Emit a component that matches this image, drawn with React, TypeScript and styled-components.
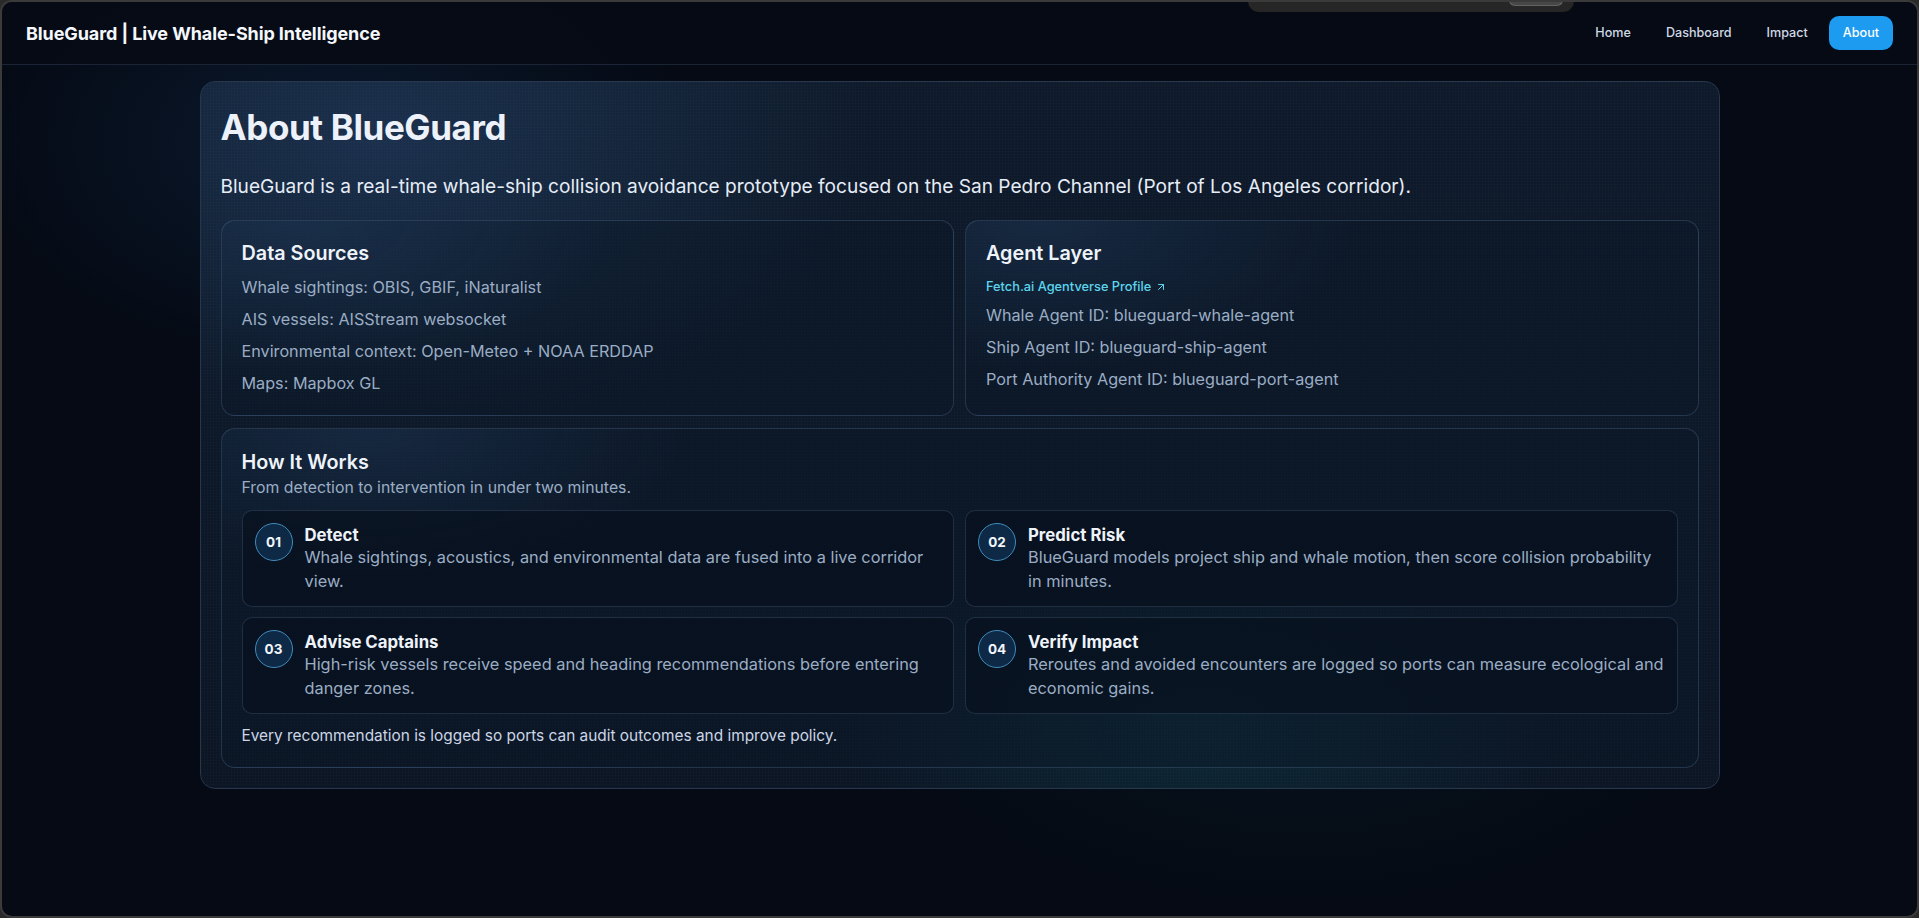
import React from "react";
import styled, { createGlobalStyle } from "styled-components";
import { ArrowUpRight } from "lucide-react";

const GlobalStyle = createGlobalStyle`
  * {
    box-sizing: border-box;
  }
  html,
  body {
    margin: 0;
    padding: 0;
    height: 100%;
    background: #2a2a2a;
  }
  body {
    font-family: Inter, "Noto Sans", sans-serif;
    -webkit-font-smoothing: antialiased;
  }
`;

const Window = styled.div`
  position: relative;
  height: 100vh;
  border: 2px solid #3a3a3a;
  border-radius: 12px;
  overflow: hidden;
  background:
    radial-gradient(ellipse 520px 320px at 330px 140px, rgba(26, 70, 125, 0.24), transparent 70%),
    radial-gradient(ellipse 600px 300px at 1300px 700px, rgba(16, 80, 96, 0.12), transparent 70%),
    #050a14;
`;

// screen-share pill that sits over the top edge of the window
const SharePill = styled.div`
  position: absolute;
  top: -2px;
  left: calc(50% + 288px);
  width: 326px;
  height: 12px;
  background: #262626;
  border-radius: 0 0 11px 11px;
  z-index: 5;
`;

const ShareButton = styled.div`
  position: absolute;
  top: 0;
  right: 11px;
  width: 54px;
  height: 6px;
  background: #474747;
  border: 1px solid #636363;
  border-top: none;
  border-radius: 0 0 6px 6px;
`;

const Header = styled.header`
  height: 63px;
  padding: 0 24px;
  display: flex;
  align-items: center;
  justify-content: space-between;
  background: rgba(6, 11, 22, 0.92);
  border-bottom: 1px solid #1a2434;
`;

const Brand = styled.div`
  color: #f4f7fb;
  font-size: 18px;
  font-weight: 700;
  letter-spacing: -0.1px;
`;

const Nav = styled.nav`
  display: flex;
  align-items: center;
  gap: 7px;
`;

const NavLink = styled.a<{ $active?: boolean }>`
  padding: 8px 14px;
  border-radius: 10px;
  font-size: 12.6px;
  line-height: 18px;
  font-weight: 500;
  text-decoration: none;
  color: ${(p) => (p.$active ? "#ffffff" : "#cfd8e4")};
  background: ${(p) => (p.$active ? "#1d9bf0" : "transparent")};
`;

const Main = styled.main`
  padding: 16px 0 0;
`;

const AboutCard = styled.section`
  width: 1520px;
  margin: 0 auto;
  padding: 20px;
  border: 1px solid #26364c;
  border-radius: 15px;
  background:
    linear-gradient(rgba(255, 255, 255, 0.012) 1px, transparent 1px) 0 0 / 3px 3px,
    linear-gradient(90deg, rgba(255, 255, 255, 0.012) 1px, transparent 1px) 0 0 / 3px 3px,
    radial-gradient(ellipse 700px 420px at 12% 8%, rgba(36, 66, 104, 0.55), transparent 70%),
    radial-gradient(ellipse 520px 260px at 66% 92%, rgba(14, 84, 96, 0.28), transparent 70%),
    linear-gradient(180deg, #0e1a2b 0%, #0b1524 100%);
`;

const Title = styled.h1`
  margin: 4px 0 24px;
  color: #edf2fa;
  font-size: 35px;
  line-height: 1.2;
  font-weight: 700;
  letter-spacing: -0.4px;
`;

const Lead = styled.p`
  margin: 0 0 20px;
  color: #e6edf7;
  font-size: 19.1px;
  line-height: 28px;
`;

const Grid = styled.div`
  display: grid;
  grid-template-columns: 1fr 1fr;
  gap: 12px 11px;
`;

const Panel = styled.div<{ $wide?: boolean }>`
  grid-column: ${(p) => (p.$wide ? "1 / -1" : "auto")};
  padding: ${(p) => (p.$wide ? "21px 20px 20px" : "20px")};
  border: 1px solid rgba(110, 140, 180, 0.26);
  border-radius: 14px;
  background:
    radial-gradient(ellipse 420px 200px at 10% 0%, rgba(40, 70, 108, 0.35), transparent 75%),
    rgba(12, 24, 40, 0.45);
`;

const PanelTitle = styled.h3<{ $tight?: boolean }>`
  margin: 0 0 ${(p) => (p.$tight ? "0" : "10px")};
  color: #eef3fa;
  font-size: 19.8px;
  line-height: 24px;
  font-weight: 600;
`;

const PanelLine = styled.p`
  margin: 0 0 8px;
  color: #9badc4;
  font-size: 16.2px;
  line-height: 24px;
  &:last-child {
    margin-bottom: 0;
  }
`;

const ProfileLink = styled.a`
  display: inline-flex;
  align-items: center;
  gap: 4px;
  margin: -3px 0 6px;
  color: #5cd5ec;
  font-size: 12.8px;
  line-height: 20px;
  font-weight: 500;
  text-decoration: none;
`;

const Subtitle = styled.p`
  margin: 4px 0 12px;
  color: #9badc4;
  font-size: 15.8px;
  line-height: 20px;
`;

const Steps = styled.div`
  display: grid;
  grid-template-columns: 1fr 1fr;
  gap: 10px 11px;
`;

const Step = styled.div`
  display: flex;
  align-items: flex-start;
  gap: 12px;
  padding: 13px 12px;
  border: 1px solid rgba(110, 140, 180, 0.24);
  border-radius: 10px;
  background: rgba(7, 15, 28, 0.62);
`;

const StepNumber = styled.div`
  flex: 0 0 38px;
  width: 38px;
  height: 38px;
  margin-top: -1px;
  border-radius: 50%;
  border: 1px solid #3f8cbc;
  background: #0e2946;
  color: #f2f6fb;
  font-size: 13.5px;
  font-weight: 700;
  display: flex;
  align-items: center;
  justify-content: center;
`;

const StepBody = styled.div`
  display: flex;
  flex-direction: column;
`;

const StepTitle = styled.div`
  color: #eef3fa;
  font-size: 16.8px;
  line-height: 22px;
  font-weight: 700;
`;

const StepText = styled.div`
  color: #9badc4;
  font-size: 16.35px;
  line-height: 23.5px;
`;

const Note = styled.p`
  margin: 11px 0 0;
  color: #cbd6e6;
  font-size: 15.4px;
  line-height: 22px;
`;

const steps = [
  {
    n: "01",
    title: "Detect",
    text: "Whale sightings, acoustics, and environmental data are fused into a live corridor view.",
  },
  {
    n: "02",
    title: "Predict Risk",
    text: "BlueGuard models project ship and whale motion, then score collision probability in minutes.",
  },
  {
    n: "03",
    title: "Advise Captains",
    text: "High-risk vessels receive speed and heading recommendations before entering danger zones.",
  },
  {
    n: "04",
    title: "Verify Impact",
    text: "Reroutes and avoided encounters are logged so ports can measure ecological and economic gains.",
  },
];

const App = () => {
  return (
    <>
      <GlobalStyle />
      <Window>
        <SharePill>
          <ShareButton />
        </SharePill>
        <Header>
          <Brand>BlueGuard | Live Whale-Ship Intelligence</Brand>
          <Nav>
            <NavLink href="#">Home</NavLink>
            <NavLink href="#">Dashboard</NavLink>
            <NavLink href="#">Impact</NavLink>
            <NavLink href="#" $active>
              About
            </NavLink>
          </Nav>
        </Header>
        <Main>
          <AboutCard>
            <Title>About BlueGuard</Title>
            <Lead>
              BlueGuard is a real-time whale-ship collision avoidance prototype focused on the San
              Pedro Channel (Port of Los Angeles corridor).
            </Lead>
            <Grid>
              <Panel>
                <PanelTitle>Data Sources</PanelTitle>
                <PanelLine>Whale sightings: OBIS, GBIF, iNaturalist</PanelLine>
                <PanelLine>AIS vessels: AISStream websocket</PanelLine>
                <PanelLine>Environmental context: Open-Meteo + NOAA ERDDAP</PanelLine>
                <PanelLine>Maps: Mapbox GL</PanelLine>
              </Panel>
              <Panel>
                <PanelTitle>Agent Layer</PanelTitle>
                <ProfileLink href="#">
                  Fetch.ai Agentverse Profile <ArrowUpRight size={12} strokeWidth={2} />
                </ProfileLink>
                <PanelLine>Whale Agent ID: blueguard-whale-agent</PanelLine>
                <PanelLine>Ship Agent ID: blueguard-ship-agent</PanelLine>
                <PanelLine>Port Authority Agent ID: blueguard-port-agent</PanelLine>
              </Panel>
              <Panel $wide>
                <PanelTitle $tight>How It Works</PanelTitle>
                <Subtitle>From detection to intervention in under two minutes.</Subtitle>
                <Steps>
                  {steps.map((s) => (
                    <Step key={s.n}>
                      <StepNumber>{s.n}</StepNumber>
                      <StepBody>
                        <StepTitle>{s.title}</StepTitle>
                        <StepText>{s.text}</StepText>
                      </StepBody>
                    </Step>
                  ))}
                </Steps>
                <Note>
                  Every recommendation is logged so ports can audit outcomes and improve policy.
                </Note>
              </Panel>
            </Grid>
          </AboutCard>
        </Main>
      </Window>
    </>
  );
};

export default App;
